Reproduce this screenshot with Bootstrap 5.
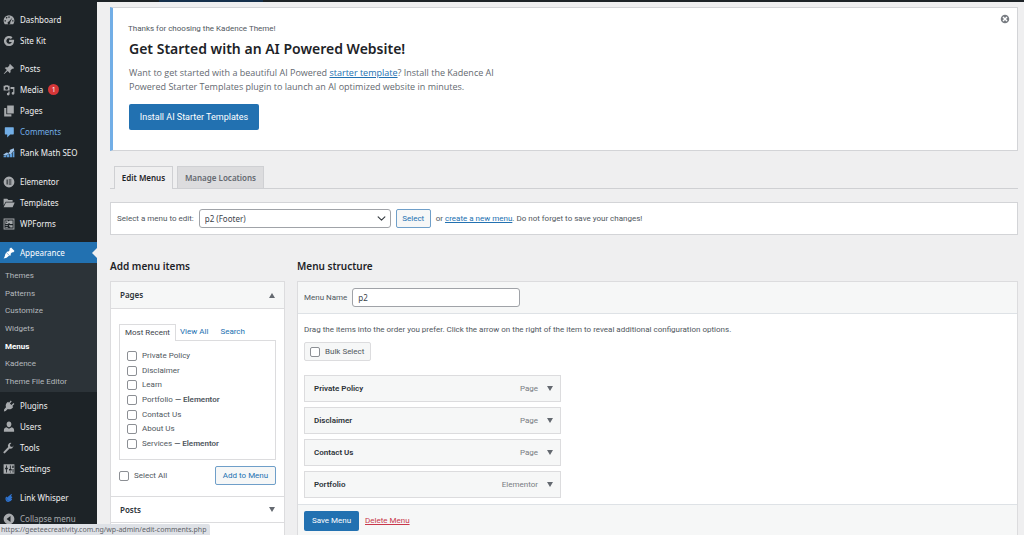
<!DOCTYPE html>
<html lang="en">
<head>
<meta charset="utf-8">
<meta name="viewport" content="width=device-width, initial-scale=1">
<title>Menus</title>
<link href="https://cdn.jsdelivr.net/npm/bootstrap@5.3.0/dist/css/bootstrap.min.css" rel="stylesheet">
<script src="https://cdn.jsdelivr.net/npm/bootstrap@5.3.0/dist/js/bootstrap.bundle.min.js" defer></script>
<style>
  :root { --human: "Noto Sans", "Open Sans", sans-serif; --plain: Roboto, "Noto Sans", sans-serif; --line: #dcdcde; --blue: #2271b1; }
  body { background: #efeff0; color: #50575e; font: 8px/12px var(--plain); }
  a { color: var(--blue); }
  .shell { min-height: 100vh; }
  .main-col { min-width: 0; }
  .topbar { height: 2px; background: #1d2327; padding-left: 62px; }
  .topbar span { display: block; width: 104px; height: 2px; background: #15304c; }

  .side { width: 97px; flex: none; background: #1d2327; padding-top: 9px; font-family: var(--human); }
  .side ul { list-style: none; margin: 0 0 8px; padding: 0; }
  .side ul:first-child { margin-bottom: 7px; }
  .side .main-link { display: flex; align-items: center; gap: 5px; height: 21px; padding-left: 3px; color: #f0f0f1; text-decoration: none; white-space: nowrap; position: relative; }
  .side .main-link svg { width: 12px; height: 12px; flex: none; fill: #a7aaad; }
  .side .hovered { color: #72aee6; }
  .side .hovered svg { fill: #72aee6; }
  .side .current { background: var(--blue); color: #fff; }
  .side .current svg { fill: #fff; }
  .side .current::after { content: ""; position: absolute; right: 0; top: 6px; border: 5px solid transparent; border-right-color: #efeff0; border-left: 0; }
  .side .collapse-link { color: #a7aaad; border: 0; background: none; width: 100%; }
  .count { background: #d63638; color: #fff; border-radius: 6px; width: 11px; height: 11px; line-height: 11px; font-size: 7px; text-align: center; }
  .side .submenu { background: #2c3338; height: 129px; padding: 4px 5px 2px; margin: 0 0 3px; display: flex; flex-direction: column; justify-content: space-between; font-family: var(--plain); }
  .submenu a { display: block; line-height: 17px; color: #b4b9be; text-decoration: none; }
  .submenu a.on { color: #fff; font-weight: 700; }

  .content { padding: 5px 6px 0 13px; min-width: 0; }
  .notice { background: #fff; border: 1px solid #d3d4d7; border-left: 3px solid #72aee6; padding: 15px 15px 19px; min-height: 144px; position: relative; }
  .notice h2 { font: 600 14px/20px var(--human); color: #1d2327; margin: 4px 0 7px 1px; }
  .notice .intro { font: 9px/14px "Open Sans", sans-serif; color: #646970; max-width: 372px; margin: 0 0 10px 1px; }
  .notice .dismiss { position: absolute; top: 6px; right: 7px; width: 10px; height: 10px; padding: 0; border: 0; background: none; display: flex; }
  .solid-btn { background: var(--blue); color: #fff; border: 0; border-radius: 2px; }
  .solid-btn:hover { background: #135e96; }
  .install { font-size: 9px; width: 130px; height: 26px; margin-left: 1px; }
  .line-btn { background: #f6f7f7; color: var(--blue); border: 1px solid #6f9fc9; border-radius: 2px; height: 19px; padding: 0; }

  .page-tabs { margin: 15px 0 13px; padding-left: 4px; gap: 4px; border-bottom: 1px solid #cfd0d3; }
  .page-tabs a { font: 600 8px/21px var(--human); text-decoration: none; color: #646970; background: #dcdcde; border: 1px solid #cfd0d3; border-bottom: 0; width: 87px; text-align: center; }
  .page-tabs a.on { width: 59px; background: #efeff0; color: #1d2327; margin-bottom: -1px; padding-bottom: 1px; }
  .picker { background: #fff; border: 1px solid #d3d4d7; padding: 6px; min-height: 33px; gap: 5px; }
  .picker .form-select { width: 192px; height: 19px; font: 8px/12px var(--human); padding: 0 18px 0 5px; border: 1px solid #a0a3a8; border-radius: 3px; color: #3c434a; background-size: 9px 9px; background-position: right 4px center; }
  .picker .line-btn { width: 35px; }
  h3.area { font: 600 10px/14px var(--human); color: #1d2327; margin: 0 0 8px; }

  .left { width: 175px; flex: none; }
  .panel { background: #fff; border: 1px solid var(--line); }
  .fold { border: 0; background: #fff; color: #2c3338; font: 600 8px/12px var(--human); height: 27px; padding: 0 9px; width: 100%; border-bottom: 1px solid var(--line); }
  .fold.open { background: #f6f7f7; }
  .fold.closed { border-top: 1px solid var(--line); }
  .tri { width: 0; height: 0; border: 3px solid transparent; border-top: 5px solid #646970; border-bottom: 0; }
  .tri.up { border-top: 0; border-bottom: 5px solid #646970; }
  .small-tabs { padding-top: 15px; }
  .small-tabs a { line-height: 15px; text-decoration: none; }
  .small-tabs a.on { border: 1px solid var(--line); border-bottom: 0; background: #fff; color: #3c434a; width: 57px; text-align: center; margin-bottom: -1px; padding-bottom: 1px; }
  .pages { border: 1px solid var(--line); height: 120px; padding: 8px 7px; display: flex; flex-direction: column; justify-content: space-between; list-style: none; margin: 0; }
  .tick { display: flex; align-items: center; gap: 5px; line-height: 14px; white-space: nowrap; }
  .tick input { appearance: none; width: 10px; height: 10px; margin: 0; border: 1px solid #8c8f94; border-radius: 2px; background: #fff; flex: none; }
  .tick input:checked { background: var(--blue); }
  .tick b { font-weight: 600; }
  .add-row { padding: 6px 0 11px; }
  .add { width: 61px; }

  .strip { background: #f6f7f7; padding: 6px; gap: 5px; }
  .strip .form-control { width: 168px; height: 19px; font: 8px/12px var(--human); padding: 0 5px; border: 1px solid #a0a3a8; border-radius: 3px; color: #3c434a; }
  .body-pad { padding: 10px 6px 0; }
  .body-pad p { margin: 0 0 6px; }
  .bulk { border: 1px solid var(--line); background: #f6f7f7; border-radius: 2px; height: 19px; padding: 0 5px; width: 67px; }
  .items { width: 257px; gap: 5px; list-style: none; margin: 14px 0 6px; padding: 0; }
  .items li { display: flex; align-items: center; height: 27px; border: 1px solid var(--line); background: #f6f7f7; padding: 0 7px 0 9px; }
  .items b { font-weight: 600; color: #2c3338; }
  .items span { margin-left: auto; margin-right: 9px; color: #787c82; }
  .items button { border: 0; background: none; padding: 0; }
  .save { width: 55px; height: 20px; }
  .delete { color: #c9384b; }
  .url-bar { position: fixed; left: 0; bottom: 0; width: 210px; height: 11px; background: #dee1e6; color: #5f6368; font: 7px/11px var(--human); padding-left: 1px; border-top-right-radius: 2px; white-space: nowrap; z-index: 5; }
</style>
</head>
<body>
<div class="shell d-flex">
  <nav class="side" aria-label="Admin menu">
    <ul>
      <li><a class="main-link" href="#"><svg viewBox="0 0 20 20"><path fill-rule="evenodd" d="M10 2a9 9 0 0 0-9 9c0 2.600 1 4.600 2 6h14c1-1.400 2-3.400 2-6a9 9 0 0 0-9-9zm-1.200 2h2.400v2.200H8.800zM4.500 6.200l1.600-1.500 1.600 1.600-1.600 1.500zM2.600 10.500h2.300v2.200H2.600zM15.500 6.200 12 13.600a2.300 2.300 0 1 1-2.200-1.300zM15.300 10.500h2.200v2.200h-2.200z"/></svg>Dashboard</a></li>
      <li><a class="main-link" href="#"><svg viewBox="0 0 20 20"><path d="M10.200 8v3.600h4.400c-.5 1.900-2.200 3-4.400 3a4.600 4.600 0 1 1 3-8.100l2.700-2.700A8.500 8.500 0 1 0 10.200 18.500c5 0 8.500-3.500 8.300-10.500z"/></svg>Site Kit</a></li>
    </ul>
    <ul>
      <li><a class="main-link" href="#"><svg viewBox="0 0 20 20"><path d="m10.400 3 1.400-1.500 6.700 6.700L17 9.600l-1.600-.2-3 3.200c.6 1.800.3 3.200-.9 4.400l-3.600-3.600L2 18.500l-.8-.7 5.200-6-3.500-3.500c1.200-1.200 2.700-1.500 4.400-.9l3.200-3z"/></svg>Posts</a></li>
      <li><a class="main-link" href="#"><svg viewBox="0 0 20 20"><path fill-rule="evenodd" d="M1 3h2l1-1h4l1 1h2v8H1zm5 1.500a2.500 2.500 0 1 0 0 5 2.500 2.500 0 0 0 0-5zM12.500 5H19v10.500a2.300 2.300 0 1 1-2-2.200V8.500h-4.500zM9 12.500h2v4.300a2.300 2.300 0 1 1-2-2.200z"/></svg>Media <span class="count">1</span></a></li>
      <li><a class="main-link" href="#"><svg viewBox="0 0 20 20"><path d="M7 1h11v13H7zM2 5h3.500v10.500H14V19H2z"/></svg>Pages</a></li>
      <li><a class="main-link hovered" href="#"><svg viewBox="0 0 20 20"><path d="M4 2h13a1 1 0 0 1 1 1v10a1 1 0 0 1-1 1h-5l-5 5v-5H4a1 1 0 0 1-1-1V3a1 1 0 0 1 1-1z"/></svg>Comments</a></li>
      <li><a class="main-link" href="#"><svg viewBox="0 0 20 20"><path fill="#5f9fdc" d="M1 14h4v3H1zM6 12h4v5H6zM11 11h4v6h-4zM16 8h3v9h-3z"/><path fill="#9fc3e8" d="m0 13 6-4 3 1 3-3-1-2 7-3 1 6-2-1-4 5-4-1-4 3z"/></svg>Rank Math SEO</a></li>
    </ul>
    <ul>
      <li><a class="main-link" href="#"><svg viewBox="0 0 20 20"><path fill-rule="evenodd" d="M10 1a9 9 0 1 1 0 18 9 9 0 0 1 0-18zM6 6v8h1.800V6zm3.500 0v1.700H14V6zm0 3.200v1.700H14V9.200zm0 3.100V14H14v-1.700z"/></svg>Elementor</a></li>
      <li><a class="main-link" href="#"><svg viewBox="0 0 20 20"><path d="M1 3h6l2 2h7v3H4.500L1 14zM5 9h14.500L16 17H1z"/></svg>Templates</a></li>
      <li><a class="main-link" href="#"><svg viewBox="0 0 20 20"><path fill-rule="evenodd" d="M1 1h18v18H1zm1.500 1.500v15h15v-15zM4 4h4l1.500 2L11 4h5v6h-5v-1.500H9V10H4zm1.500 1.800v2.400H7V5.800zM4 12h4v1.500H4zm6 0h6v4h-4v-2h-2zm-6 3h4v1.200H4z"/></svg>WPForms</a></li>
    </ul>
    <a class="main-link current" href="#"><svg viewBox="0 0 20 20"><path d="M10.500 3.500 13.500 1l5.700 5.700-2.500 2.500-1.500-.3-2.400 2.500c.3 1.500 0 2.600-1 3.600L5.500 8.700c1-1 2.100-1.300 3.600-1L11.400 5zM5.500 9.500l5 5c-2.500.5-3.500 4.500-9.500 4.500 3-3 1.500-6.500 4.500-9.500z"/></svg>Appearance</a>
    <ul class="submenu">
      <li><a href="#">Themes</a></li>
      <li><a href="#">Patterns</a></li>
      <li><a href="#">Customize</a></li>
      <li><a href="#">Widgets</a></li>
      <li><a class="on" href="#">Menus</a></li>
      <li><a href="#">Kadence</a></li>
      <li><a href="#">Theme File Editor</a></li>
    </ul>
    <ul>
      <li><a class="main-link" href="#"><svg viewBox="0 0 20 20"><path d="m13 1 1.500 1.500L11.500 6 14 8.500 17.500 5 19 6.500 15.500 10l1.500 1.500c-2 3-5.500 5-9 3.500L4.500 18.500 1.500 19 2 15.500 5 12C3.500 8.500 5.500 5 8.500 3L10 4.500z"/></svg>Plugins</a></li>
      <li><a class="main-link" href="#"><svg viewBox="0 0 20 20"><path d="M10 1c2.500 0 4 2 4 4.500S12.500 10.500 10 10.500 6 8 6 5.500 7.500 1 10 1zM5.500 10.500 10 13l4.500-2.500c2.500.7 4 2.500 4 5V18h-17v-2.500c0-2.500 1.500-4.300 4-5z"/></svg>Users</a></li>
      <li><a class="main-link" href="#"><svg viewBox="0 0 20 20"><path d="M17 7.500A5 5 0 0 1 11 11l-7.500 7.500a1.700 1.700 0 0 1-2.400-2.400L8.600 8.500A5 5 0 0 1 14 1.500L11.500 4.500l.8 3 3 .7L18.500 5.500z"/></svg>Tools</a></li>
      <li><a class="main-link" href="#"><svg viewBox="0 0 20 20"><path fill-rule="evenodd" d="M1 2h18v16H1zm4 2v4H3.500v2.500H5V16h1.500v-5.500H8V8H6.500V4zm6.500 0v6H10v2.500h4.500V10H13V4zm0 10v2H13v-2zM16 4v2h-1v2h3V6h-.5V4zm0 6v6h1.500v-6z"/></svg>Settings</a></li>
    </ul>
    <ul class="mb-0">
      <li><a class="main-link" href="#"><svg viewBox="0 0 20 20"><g fill="none" stroke="#2f74d0" stroke-width="2"><path d="M14.500 4 8 9.500a2 2 0 0 0 3 3l4-4M14 7l-6 5.500M6 8c-2 3-.5 7.500 2.500 7.500 3 0 5-2 6-4"/></g></svg>Link Whisper</a></li>
      <li><button class="main-link collapse-link" type="button"><svg viewBox="0 0 20 20"><path fill-rule="evenodd" d="M10 1a9 9 0 1 1 0 18 9 9 0 0 1 0-18zm2.500 4L6 10l6.500 5z"/></svg>Collapse menu</button></li>
    </ul>
  </nav>

  <div class="main-col flex-grow-1 d-flex flex-column">
    <div class="topbar"><span></span></div>
    <main class="content flex-grow-1 d-flex flex-column">
      <section class="notice">
        <button class="dismiss" type="button" aria-label="Dismiss"><svg width="10" height="10" viewBox="0 0 20 20" fill="#787c82"><path fill-rule="evenodd" d="M10 1.500a8.500 8.500 0 1 1 0 17 8.500 8.500 0 0 1 0-17zM7 5 5 7l3 3-3 3 2 2 3-3 3 3 2-2-3-3 3-3-2-2-3 3z"/></svg></button>
        <div>Thanks for choosing the Kadence Theme!</div>
        <h2>Get Started with an AI Powered Website!</h2>
        <p class="intro">Want to get started with a beautiful AI Powered <a href="#">starter template</a>? Install the Kadence AI Powered Starter Templates plugin to launch an AI optimized website in minutes.</p>
        <button class="solid-btn install" type="button">Install AI Starter Templates</button>
      </section>

      <nav class="page-tabs d-flex" aria-label="Menu screens">
        <a class="on" href="#">Edit Menus</a>
        <a href="#">Manage Locations</a>
      </nav>

      <form class="picker d-flex align-items-center">
        <label for="menu">Select a menu to edit:</label>
        <select id="menu" class="form-select"><option>p2 (Footer)</option></select>
        <button class="line-btn" type="button">Select</button>
        <span>or <a href="#">create a new menu</a>. Do not forget to save your changes!</span>
      </form>

      <div class="d-flex flex-grow-1 pt-4">
        <section class="left d-flex flex-column me-2">
          <h3 class="area">Add menu items</h3>
          <div class="panel flex-grow-1">
            <button class="fold open d-flex align-items-center justify-content-between" type="button">Pages<i class="tri up"></i></button>
            <div class="px-2">
              <nav class="small-tabs d-flex" aria-label="Page lists">
                <a class="on" href="#">Most Recent</a>
                <a class="ms-1" href="#">View All</a>
                <a class="ms-2 ps-1" href="#">Search</a>
              </nav>
              <ul class="pages">
                <li><label class="tick"><input type="checkbox">Private Policy</label></li>
                <li><label class="tick"><input type="checkbox">Disclaimer</label></li>
                <li><label class="tick"><input type="checkbox">Learn</label></li>
                <li><label class="tick"><input type="checkbox"><span>Portfolio <b>— Elementor</b></span></label></li>
                <li><label class="tick"><input type="checkbox">Contact Us</label></li>
                <li><label class="tick"><input type="checkbox">About Us</label></li>
                <li><label class="tick"><input type="checkbox"><span>Services <b>— Elementor</b></span></label></li>
              </ul>
              <div class="d-flex justify-content-between align-items-center add-row">
                <label class="tick"><input type="checkbox">Select All</label>
                <button class="line-btn add" type="button">Add to Menu</button>
              </div>
            </div>
            <button class="fold closed d-flex align-items-center justify-content-between" type="button">Posts<i class="tri"></i></button>
          </div>
        </section>

        <section class="flex-grow-1 d-flex flex-column ms-1">
          <h3 class="area">Menu structure</h3>
          <div class="panel flex-grow-1 d-flex flex-column">
            <div class="strip border-bottom d-flex align-items-center">
              <label for="name">Menu Name</label>
              <input id="name" class="form-control" type="text" value="p2">
            </div>
            <div class="body-pad">
              <p>Drag the items into the order you prefer. Click the arrow on the right of the item to reveal additional configuration options.</p>
              <label class="tick bulk"><input type="checkbox">Bulk Select</label>
              <ul class="items d-flex flex-column">
                <li><b>Private Policy</b><span>Page</span><button type="button" aria-label="Open Private Policy"><i class="tri d-block"></i></button></li>
                <li><b>Disclaimer</b><span>Page</span><button type="button" aria-label="Open Disclaimer"><i class="tri d-block"></i></button></li>
                <li><b>Contact Us</b><span>Page</span><button type="button" aria-label="Open Contact Us"><i class="tri d-block"></i></button></li>
                <li><b>Portfolio</b><span>Elementor</span><button type="button" aria-label="Open Portfolio"><i class="tri d-block"></i></button></li>
              </ul>
            </div>
            <div class="strip border-top flex-grow-1">
              <button class="solid-btn save" type="button">Save Menu</button>
              <a class="delete ms-1" href="#">Delete Menu</a>
            </div>
          </div>
        </section>
      </div>
    </main>
  </div>
</div>
<div class="url-bar">https://geeteecreativity.com.ng/wp-admin/edit-comments.php</div>
</body>
</html>
